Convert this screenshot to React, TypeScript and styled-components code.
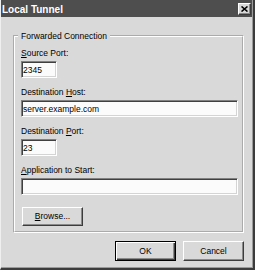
import React from 'react';
import styled, { createGlobalStyle } from 'styled-components';

const GlobalStyle = createGlobalStyle`
  html, body {
    margin: 0;
    padding: 0;
    background: #d9d9d9;
  }
  body {
    font-family: "Liberation Sans", Arial, sans-serif;
    color: #000;
  }
`;

const Window = styled.div`
  width: 255px;
  height: 270px;
  box-sizing: border-box;
  background: #d9d9d9;
  border-left: 1px solid #efefef;
  border-right: 2px solid #3c3c3c;
  border-bottom: 2px solid #3c3c3c;
  padding: 0 1px 1px 0;
  box-shadow: inset -1px -1px 0 #9a9a9a;
  display: flex;
  flex-direction: column;
`;

const TitleBar = styled.div`
  height: 17px;
  background: #4e4e4e;
  display: flex;
  justify-content: space-between;
  align-items: flex-start;
  padding: 0 1px;
`;

const Title = styled.span`
  color: #fff;
  font-weight: bold;
  font-size: 10px;
  line-height: 12px;
  margin-top: 4px;
`;

const CloseButton = styled.button`
  width: 13px;
  height: 12px;
  margin-top: 3px;
  padding: 0;
  box-sizing: border-box;
  background: #d9d9d9;
  border: 1px solid;
  border-color: #fff #3c3c3c #3c3c3c #fff;
  box-shadow: inset -1px -1px 0 #8a8a8a;
  display: flex;
  align-items: center;
  justify-content: center;
`;

const Body = styled.div`
  padding: 13px 8px 0 12px;
  display: flex;
  flex-direction: column;
`;

const Group = styled.fieldset`
  margin: 0;
  padding: 0;
  min-width: 0;
  width: 231px;
  box-sizing: border-box;
  border: 2px groove #fff;
`;

const Legend = styled.legend`
  margin-left: 3px;
  padding: 0 3px;
  font-size: 8.5px;
  line-height: 12px;
`;

const GroupInner = styled.div`
  padding: 6px 0 5px 6px;
  display: flex;
  flex-direction: column;
`;

const Field = styled.div`
  display: flex;
  flex-direction: column;
  & + & {
    margin-top: 9px;
  }
`;

const Label = styled.label`
  font-size: 8.5px;
  line-height: 11px;
  margin-bottom: 2px;
`;

const TextBox = styled.input<{ $w: number }>`
  width: ${p => p.$w}px;
  height: 17px;
  box-sizing: border-box;
  margin: 0;
  padding: 0 1px;
  background: #fbfbfb;
  border: 1px solid;
  border-color: #808080 #fff #fff #808080;
  box-shadow: inset 1px 1px 0 #404040, inset -1px -1px 0 #d4d4d4;
  font-family: "Liberation Sans", Arial, sans-serif;
  font-size: 8.5px;
  color: #000;
  outline: none;
`;

const Button = styled.button<{ $default?: boolean; $h?: number }>`
  width: 61px;
  height: ${p => p.$h ?? 20}px;
  box-sizing: border-box;
  margin: 0;
  padding: 0;
  background: #d9d9d9;
  font-family: "Liberation Sans", Arial, sans-serif;
  font-size: 8.5px;
  color: #000;
  border: 1px solid;
  border-color: ${p => (p.$default ? '#000' : '#fff #3c3c3c #3c3c3c #fff')};
  box-shadow: ${p =>
    p.$default
      ? 'inset 1px 1px 0 #fff, inset -1px -1px 0 #3c3c3c, inset -2px -2px 0 #8a8a8a'
      : 'inset -1px -1px 0 #8a8a8a'};
`;

const BrowseRow = styled.div`
  margin-top: 10px;
  padding-left: 1px;
`;

const Footer = styled.div`
  display: flex;
  justify-content: flex-end;
  gap: 7px;
  margin-top: 8px;
`;

const fields = [
  { key: 'S', rest: 'ource Port:', pre: '', value: '2345', w: 36 },
  { key: 'H', rest: 'ost:', pre: 'Destination ', value: 'server.example.com', w: 217 },
  { key: 'P', rest: 'ort:', pre: 'Destination ', value: '23', w: 36 },
  { key: 'A', rest: 'pplication to Start:', pre: '', value: '', w: 217 },
];

export default function App() {
  return (
    <>
      <GlobalStyle />
      <Window>
        <TitleBar>
          <Title>Local Tunnel</Title>
          <CloseButton aria-label="Close">
            <svg width="7" height="6" viewBox="0 0 7 6">
              <path d="M0.5 0.5 L6.5 5.5 M6.5 0.5 L0.5 5.5" stroke="#000" strokeWidth="1.6" />
            </svg>
          </CloseButton>
        </TitleBar>
        <Body>
          <Group>
            <Legend>Forwarded Connection</Legend>
            <GroupInner>
              {fields.map(f => (
                <Field key={f.key}>
                  <Label>
                    {f.pre}
                    <u>{f.key}</u>
                    {f.rest}
                  </Label>
                  <TextBox $w={f.w} defaultValue={f.value} />
                </Field>
              ))}
              <BrowseRow>
                <Button $h={19}>
                  <u>B</u>rowse...
                </Button>
              </BrowseRow>
            </GroupInner>
          </Group>
          <Footer>
            <Button $default>OK</Button>
            <Button>Cancel</Button>
          </Footer>
        </Body>
      </Window>
    </>
  );
}
